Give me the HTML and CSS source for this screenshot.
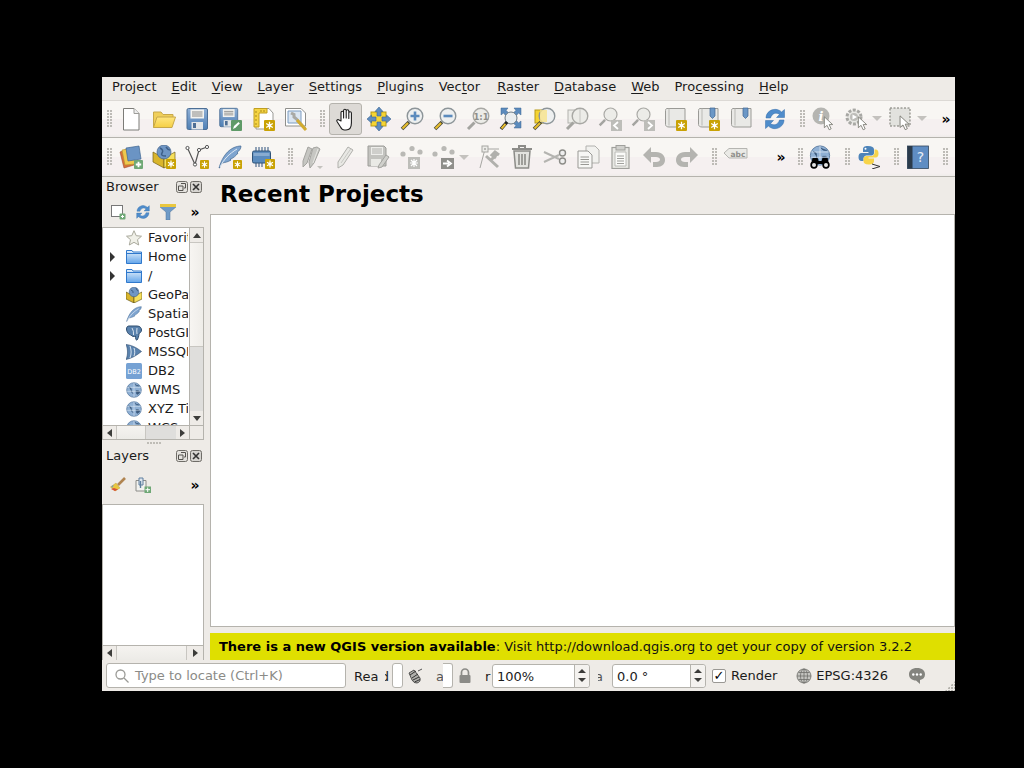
FILE: index.html
```html
<!DOCTYPE html>
<html>
	<head>
		<meta charset="utf-8">
		<title>QGIS</title>
		<link rel="stylesheet" href="styles.css">
	</head>
	<body>
		<svg class="defs" width="0" height="0">
			<defs>
				<linearGradient id="blue" x1="0" y1="0" x2="0" y2="1"><stop offset="0" stop-color="#8fb0d6"/><stop offset="1" stop-color="#4f7fb5"/></linearGradient>
				<linearGradient id="folder" x1="0" y1="0" x2="0" y2="1"><stop offset="0" stop-color="#ffe680"/><stop offset="1" stop-color="#f5cf45"/></linearGradient>
				<linearGradient id="bluefolder" x1="0" y1="0" x2="0" y2="1"><stop offset="0" stop-color="#e6f1fb"/><stop offset="1" stop-color="#63a5ea"/></linearGradient>

				<symbol id="badge" viewBox="0 0 10 10"><rect width="10" height="10" rx="1" fill="#c9a205"/><path d="M5 1.5V8.5M2 3.2L8 6.8M8 3.2L2 6.8" stroke="#fff" stroke-width="1.2"/><circle cx="5" cy="5" r="1.5" fill="#fff"/></symbol>
				<symbol id="plus-badge" viewBox="0 0 10 10"><rect width="10" height="10" rx="1" fill="#6fa876"/><path d="M5 2V8M2 5H8" stroke="#fff" stroke-width="2"/></symbol>
				<symbol id="cursor" viewBox="0 0 12 18"><path d="M1 1V14L4.3 11.2L6.8 16.5L9.2 15.4L6.8 10.3H11Z" fill="#fff" stroke="#77776f" stroke-width="1"/></symbol>

				<symbol id="i-new" viewBox="0 0 24 24"><path d="M4.500 1.500H15L20 6.500V23H4.500Z" fill="#fff" stroke="#7c7c78"/><path d="M15 1.500V6.500H20" fill="#eee" stroke="#9c9c98"/></symbol>
				<symbol id="i-open" viewBox="0 0 24 24"><path d="M1.500 20.500V5H9L11 7.500H21V10" fill="#f0cf5a" stroke="#c7a84a"/><path d="M1.500 20.500L5 10H23.500L20 20.500Z" fill="url(#folder)" stroke="#c7a84a"/></symbol>
				<symbol id="floppy" viewBox="0 0 24 24"><path d="M3.500 1.500H21Q22.500 1.500 22.500 3V21Q22.500 22.500 21 22.500H3.500Q2 22.500 2 21V3Q2 1.500 3.500 1.500Z" fill="url(#blue)" stroke="#4c6f96"/><rect x="5.500" y="2.500" width="13.500" height="9" fill="#f3f3f0"/><path d="M7 5H17.500M7 7H17.500M7 9H17.500" stroke="#8a8a88"/><rect x="6.500" y="15" width="11.500" height="7.500" fill="#e4e6e8"/><rect x="8" y="16" width="3" height="5" fill="#4f6f95"/></symbol>
				<symbol id="i-saveas" viewBox="0 0 24 24"><use href="#floppy" width="21" height="21"/><rect x="13" y="13" width="11" height="11" rx="1" fill="#5f9a68"/><path d="M15 22L16 19L20.500 15L21.800 16.400L17.500 20.800Z" fill="#fff"/></symbol>
				<symbol id="i-layoutnew" viewBox="0 0 24 24"><path d="M5 1.500H18L22 6V22H5Z" fill="#fff" stroke="#9a9a96"/><path d="M3 1.500H16V6H8V20H3Z" fill="#f5d442" stroke="#c09f20"/><path d="M4 5H6M4 9H6M4 13H6M4 17H6M10 3V5M13 3V5" stroke="#a98a1c"/><use href="#badge" x="13" y="13" width="11" height="11"/></symbol>
				<symbol id="i-layoutman" viewBox="0 0 24 24"><path d="M1.500 1.500H17L21.500 6V19H1.500Z" fill="#fff" stroke="#8f8f8b"/><path d="M4 4H17V16H4Z" fill="#dbe6f2" stroke="#7d9cc0"/><path d="M7 6L10 7.500V10L12.500 12L21 21.500" fill="none" stroke="#a9a9a5" stroke-width="3"/><path d="M13 13L22 23" stroke="#d2ab2f" stroke-width="3"/></symbol>
				<symbol id="i-hand" viewBox="0 0 24 24"><path d="M7 14V5.500A1.300 1.300 0 0 1 9.600 5.500V11V3.500A1.300 1.300 0 0 1 12.200 3.500V11V4A1.300 1.300 0 0 1 14.800 4V11.500V6A1.300 1.300 0 0 1 17.400 6V16C17.400 20 15.500 23 12 23H10.500C8.500 23 7.500 22 6.500 20L3 14.500C2.200 13 4 12 5 13Z" fill="#fff" stroke="#1c1c1c" stroke-width="1.100" stroke-linejoin="round"/></symbol>
				<symbol id="i-pansel" viewBox="0 0 24 24"><rect x="4" y="5" width="15" height="14" fill="#f5d432" stroke="#b79a18"/><path d="M12 0L16 4.500H14V9H10V4.500H8ZM12 24L16 19.500H14V15H10V19.500H8ZM0 12L4.500 8V10H9V14H4.500V16ZM24 12L19.500 8V10H15V14H19.500V16Z" fill="#5f8dbf" stroke="#3f6690" stroke-width=".6"/></symbol>
				<symbol id="glass" viewBox="0 0 24 24"><path d="M9 15L2 22" stroke="#4a4a38" stroke-width="3.600"/><path d="M8 16L2.500 21.500" stroke="#e8be2e" stroke-width="2.200"/><circle cx="15" cy="9" r="7.800" fill="#eef0f0" stroke="#8d9599" stroke-width="1.400"/></symbol>
				<symbol id="glass-grey" viewBox="0 0 24 24"><path d="M8.500 15.500L2 22" stroke="#a4a4a0" stroke-width="3"/><circle cx="15" cy="9" r="7.800" fill="#ecece8" stroke="#a8a8a4" stroke-width="1.400"/></symbol>
				<symbol id="i-zin" viewBox="0 0 24 24"><use href="#glass"/><path d="M15 4.500V13.500M10.500 9H19.500" stroke="#5b8bbd" stroke-width="2.600"/></symbol>
				<symbol id="i-zout" viewBox="0 0 24 24"><use href="#glass"/><path d="M10.500 9H19.500" stroke="#5b8bbd" stroke-width="2.600"/></symbol>
				<symbol id="i-z11" viewBox="0 0 24 24"><use href="#glass-grey"/><text x="15" y="12.500" text-anchor="middle" font-family="DejaVu Sans" font-weight="bold" font-size="8.500" fill="#8f8f8b">1:1</text></symbol>
				<symbol id="i-zfull" viewBox="0 0 24 24"><path d="M2 1H9L7 3.500L10 6L7 9L4.500 6L2 8ZM22 1H15L17 3.500L14 6L17 9L19.500 6L22 8ZM22 21H15L17 18.500L14 16L17 13L19.500 16L22 14Z" fill="#5b8bbd" stroke="#3f6690" stroke-width=".5"/><circle cx="12" cy="11" r="6" fill="#e9edef" stroke="#6f7c85"/><path d="M8 15L2 22" stroke="#222" stroke-width="3.400"/><path d="M6.500 17L2.500 21.500" stroke="#e8be2e" stroke-width="2"/></symbol>
				<symbol id="i-zsel" viewBox="0 0 24 24"><rect x="3" y="3" width="12" height="13" fill="#f5d432" stroke="#b79a18"/><use href="#glass"/><rect x="8" y="3" width="7" height="12" fill="#f7e48a" opacity=".8"/></symbol>
				<symbol id="i-zlayer" viewBox="0 0 24 24"><rect x="3" y="3" width="12" height="13" fill="#ecece8" stroke="#b1b1ad"/><use href="#glass-grey"/><path d="M15 2V16" stroke="#c4c4c0"/></symbol>
				<symbol id="i-zlast" viewBox="0 0 24 24"><use href="#glass-grey" width="20" height="20"/><rect x="13" y="13" width="11" height="11" fill="#bdbdb9"/><path d="M20 15L16 18.500L20 22" fill="none" stroke="#fff" stroke-width="1.800"/></symbol>
				<symbol id="i-znext" viewBox="0 0 24 24"><use href="#glass-grey" width="20" height="20"/><rect x="13" y="13" width="11" height="11" fill="#bdbdb9"/><path d="M17 15L21 18.500L17 22" fill="none" stroke="#fff" stroke-width="1.800"/></symbol>
				<symbol id="scroll" viewBox="0 0 24 24"><path d="M3 1.500H21V20H5C3 20 1.500 19 1.500 17.500V3.500C1.500 2.500 2 1.500 3 1.500Z" fill="#e9e9e6" stroke="#9a9a96"/><path d="M5 1.500V18.500" stroke="#b9b9b5"/></symbol>
				<symbol id="i-map" viewBox="0 0 24 24"><use href="#scroll"/><use href="#badge" x="12" y="13" width="11" height="11"/></symbol>
				<symbol id="i-bmnew" viewBox="0 0 24 24"><use href="#scroll"/><path d="M13 1H18V9L15.500 11.500L13 9Z" fill="#6a97c6" stroke="#3f6690" stroke-width=".7"/><use href="#badge" x="12" y="13" width="11" height="11"/></symbol>
				<symbol id="i-bm" viewBox="0 0 24 24"><use href="#scroll"/><path d="M13 1H18V9L15.500 11.500L13 9Z" fill="#6a97c6" stroke="#3f6690" stroke-width=".7"/></symbol>
				<symbol id="i-refresh" viewBox="0 0 24 24"><path d="M3 11C3 5 9 1.500 14 2.500C16 3 17.500 3.800 18.500 5L21.500 2.500V10.500H13.500L16.500 7.500C13.500 5 9 6 7.500 11Z" fill="#4f8ccb" stroke="#356da8" stroke-width=".5"/><path d="M21 13C21 19 15 22.500 10 21.500C8 21 6.500 20.200 5.500 19L2.500 21.500V13.500H10.500L7.500 16.500C10.500 19 15 18 16.500 13Z" fill="#4f8ccb" stroke="#356da8" stroke-width=".5"/></symbol>
				<symbol id="i-identify" viewBox="0 0 24 24"><circle cx="9" cy="9" r="8.500" fill="#b5b5b1"/><text x="9" y="14" text-anchor="middle" font-family="DejaVu Serif" font-style="italic" font-weight="bold" font-size="13" fill="#fff">i</text><use href="#cursor" x="11" y="9" width="11" height="15"/></symbol>
				<symbol id="i-action" viewBox="0 0 24 24"><circle cx="10" cy="10" r="7" fill="#e9e9e5" stroke="#a8a8a4" stroke-width="3" stroke-dasharray="3 1.500"/><circle cx="10" cy="10" r="4" fill="#bdbdb9"/><path d="M8.500 7.500L13 10L8.500 12.500Z" fill="#fff"/><use href="#cursor" x="13" y="9" width="11" height="15"/></symbol>
				<symbol id="i-select" viewBox="0 0 24 24"><rect x="1" y="1" width="20" height="18" fill="#e2e2de" stroke="#77776f" stroke-dasharray="2 1.500"/><use href="#cursor" x="10" y="8" width="11" height="16"/></symbol>

				<symbol id="i-dsm" viewBox="0 0 24 24"><path d="M1 7L11 3L15 20L5 23Z" fill="#d96f3a" stroke="#9e4e29" stroke-width=".6"/><path d="M3 5L14 3L16 19L6 20Z" fill="#efc84d" stroke="#b4932d" stroke-width=".6"/><path d="M7 3L20 1L22 14L9 16Z" fill="#6b94c4" stroke="#3f6690" stroke-width=".7"/><use href="#plus-badge" x="15" y="15" width="9" height="9"/></symbol>
				<symbol id="i-gpkg" viewBox="0 0 24 24"><path d="M1 7L12 13V23L1 17Z" fill="#d9b52c" stroke="#72601a" stroke-width=".7"/><path d="M12 13L23 7V17L12 23Z" fill="#f6e05c" stroke="#72601a" stroke-width=".7"/><circle cx="12" cy="7" r="7" fill="#6f96c4" stroke="#3f5f85" stroke-width=".7"/><path d="M8 3Q12 5 10 8T14 11M14 2Q16 5 18 5" stroke="#3d5f88" fill="none" stroke-width="1.500"/><use href="#badge" x="14" y="14" width="10" height="10"/></symbol>
				<symbol id="i-shp" viewBox="0 0 24 24"><path d="M2.500 3L10 19.500L14 5L22 2" fill="none" stroke="#555" stroke-width="1.200"/><g fill="#fff" stroke="#555"><circle cx="2.500" cy="3" r="1.600"/><circle cx="10" cy="19.500" r="1.600"/><circle cx="14" cy="5" r="1.600"/><circle cx="22" cy="2" r="1.600"/></g><use href="#badge" x="15" y="15" width="9" height="9"/></symbol>
				<symbol id="feather" viewBox="0 0 24 24"><path d="M1 23C3 16 7 7 15 3C18 1.500 21 1 23 1C23 4 21 6 19 7.500L20 8C18 11 15 13 12 14.500L13 15C10 17 7 17.500 4 18C3 19.500 2 21.500 1.500 23Z" fill="#7ea4cf" stroke="#3f6690" stroke-width=".7"/><path d="M2 22C6 14 11 9 19 4" stroke="#dfe9f4" fill="none"/></symbol>
				<symbol id="i-spatialite" viewBox="0 0 24 24"><use href="#feather"/><use href="#badge" x="15" y="15" width="9" height="9"/></symbol>
				<symbol id="i-temp" viewBox="0 0 24 24"><path d="M5 6V2M8 6V2M11 6V2M14 6V2M17 6V2M5 18V22M8 18V22M11 18V22" stroke="#3f5f85" stroke-width="1.100"/><rect x="1.500" y="6" width="18" height="12" rx="1.500" fill="#5b8bbd" stroke="#2f5378"/><rect x="2.500" y="8" width="16" height="3" fill="#88abd0"/><use href="#badge" x="14" y="14" width="10" height="10"/></symbol>

				<symbol id="i-editall" viewBox="0 0 24 24"><path d="M3 16L8 2L12 4L7 18L3 22ZM9 17L13 3L17 2L20 4L14 18L10 23Z" fill="#c6c6c2" stroke="#a3a39f"/><path d="M13 18L18 4" stroke="#e6e6e2"/></symbol>
				<symbol id="i-pencil" viewBox="0 0 24 24"><path d="M5 17L15 2L20 5L10 20L5 23Z" fill="#e8e8e4" stroke="#b0b0ac"/><path d="M8 18L18 3.500" stroke="#c8c8c4"/></symbol>
				<symbol id="i-savelayer" viewBox="0 0 24 24"><path d="M2 1H18L20 3V21H2Z" fill="#c3c3bf" stroke="#9d9d99"/><rect x="5" y="2" width="12" height="8" fill="#ededea"/><path d="M6 4H16M6 6H16M6 8H16" stroke="#b0b0ac"/><rect x="5" y="14" width="10" height="7" fill="#eaeae6"/><path d="M13 20L20 10L23 12L16 22L12 23Z" fill="#d0d0cc" stroke="#a3a39f"/></symbol>
				<symbol id="i-addf" viewBox="0 0 24 24"><g fill="#b9b9b5"><circle cx="4" cy="9" r="2.600"/><circle cx="13" cy="3.500" r="2.600"/><circle cx="21" cy="7" r="2.600"/></g><rect x="9" y="12" width="12" height="12" fill="#bdbdb9"/><path d="M15 14V22M11 18H19M12 15L18 21M18 15L12 21" stroke="#fff" stroke-width="1.200"/></symbol>
				<symbol id="i-movef" viewBox="0 0 24 24"><g fill="#b9b9b5"><circle cx="4" cy="9" r="2.600"/><circle cx="13" cy="3.500" r="2.600"/><circle cx="21" cy="7" r="2.600"/></g><rect x="10" y="13" width="13" height="11" fill="#8f8f8b"/><path d="M12 18.500H18M16 15.500L20 18.500L16 21.500" stroke="#fff" stroke-width="1.800" fill="none"/></symbol>
				<symbol id="i-nodetool" viewBox="0 0 24 24"><path d="M3 23L8 4H22" fill="none" stroke="#a6a6a2"/><rect x="5" y="1" width="6" height="6" fill="#ecece8" stroke="#a6a6a2"/><circle cx="8" cy="4" r="1" fill="#a6a6a2"/><path d="M9 11L21 22M21 8L13 16M22 10L18 7L15 10L19 13" stroke="#b0b0ac" stroke-width="3" fill="none"/></symbol>
				<symbol id="i-trash" viewBox="0 0 24 24"><path d="M4 6H20L18.500 23H5.500Z" fill="#e3e3df" stroke="#8c8c88" stroke-width="1.500"/><path d="M2 4H22M9 3V1H15V3" stroke="#8c8c88" stroke-width="2" fill="none"/><path d="M9 9V20M12 9V20M15 9V20" stroke="#8c8c88" stroke-width="1.600"/></symbol>
				<symbol id="i-cut" viewBox="0 0 24 24"><path d="M1 7L16 14M1 17L16 10" stroke="#b4b4b0" stroke-width="2" fill="none"/><circle cx="19.500" cy="8" r="3" fill="#eee" stroke="#8c8c88" stroke-width="1.400"/><circle cx="19.500" cy="16" r="3" fill="#eee" stroke="#8c8c88" stroke-width="1.400"/></symbol>
				<symbol id="i-copy" viewBox="0 0 24 24"><path d="M10 1H19L23 5V18H10Z" fill="#f1f1ee" stroke="#b2b2ae"/><path d="M2 6H12L16 10V23H2Z" fill="#f7f7f5" stroke="#999995"/><path d="M4.500 12H13M4.500 14.500H13M4.500 17H13M4.500 19.500H13" stroke="#999995"/></symbol>
				<symbol id="i-paste" viewBox="0 0 24 24"><rect x="3" y="2.500" width="17" height="21" fill="#e8e8e4" stroke="#a0a09c" stroke-width="1.200"/><rect x="7" y="0.500" width="9" height="4.500" fill="#d0d0cc" stroke="#a0a09c"/><path d="M6 7H17V21H6Z" fill="#fafaf8" stroke="#bcbcb8"/><path d="M8 11H15M8 13.500H15M8 16H15M8 18.500H15" stroke="#a0a09c"/></symbol>
				<symbol id="i-undo" viewBox="0 0 24 24"><path d="M1 10L9 2V7H14C20 7 23 11 23 15C23 19 20 22 15 22H11V17H14C16.500 17 18 16 18 14.500C18 13 16.500 12 14 12H9V18Z" fill="#b4b4b0"/></symbol>
				<symbol id="i-redo" viewBox="0 0 24 24"><path d="M23 10L15 2V7H10C4 7 1 11 1 15C1 19 4 22 9 22H13V17H10C7.500 17 6 16 6 14.500C6 13 7.500 12 10 12H15V18Z" fill="#b4b4b0"/></symbol>
				<symbol id="i-abc" viewBox="0 0 24 24"><path d="M0 8L5 3.500H23V13H5Z" fill="#eaeae6" stroke="#b5b5b1"/><text x="14" y="11.500" text-anchor="middle" font-family="DejaVu Sans" font-weight="bold" font-size="7.500" fill="#8f8f8b">abc</text></symbol>
				<symbol id="globe" viewBox="0 0 24 24"><circle cx="12" cy="12" r="11" fill="#8fb0d4" stroke="#4e7199"/><path d="M4 7Q9 9 8 12T11 18M13 3Q15 7 20 6M15 13Q19 12 21 15Q18 20 16 18Z" fill="#3d5b7e" stroke="#3d5b7e"/><path d="M2 8H22M1.500 14H22M12 1V23" stroke="#eef4fa" stroke-width=".7" fill="none"/></symbol>
				<symbol id="i-metasearch" viewBox="0 0 24 24"><use href="#globe" width="24" height="21"/><path d="M3 19L4.500 13H9.500L10.500 16H13.500L14.500 13H19.500L21 19Z" fill="#000"/><circle cx="6" cy="20" r="3.700" fill="#000"/><circle cx="18" cy="20" r="3.700" fill="#000"/><circle cx="6" cy="20" r="2" fill="#e4e4e4"/><circle cx="18" cy="20" r="2" fill="#e4e4e4"/></symbol>
				<symbol id="i-python" viewBox="-1 0 24 24"><path d="M10 1C6 1 5 2.500 5 4.500V7H10.500V8H3.500C1.500 8 .5 9.500 .5 12C.5 14.500 1.500 16 3.500 16H5.500V13.500C5.500 12 7 10.500 8.500 10.500H13.500C15 10.500 16 9.500 16 8V4.500C16 2.500 14 1 10 1Z" fill="#4d84b9"/><circle cx="7.500" cy="3.800" r="1" fill="#fff"/><path d="M10.500 19.500C14.500 19.500 16 18 16 16V13.500H10.500V12.500H17.500C19.500 12.500 20.500 11 20.500 8.500C20.500 6 19.500 4.500 17.500 4.500H16.500V8C16.500 9.500 15 11 13.500 11H8.500C7 11 5.500 12 5.500 13.500V16C5.500 18 7 19.500 10.500 19.500Z" fill="#f7d44a"/><path d="M14 19L22 21.500L14 24" fill="none" stroke="#333" stroke-width="1"/></symbol>
				<symbol id="i-help" viewBox="0 0 24 24"><rect x="1.500" y="1" width="21" height="22.500" fill="#5f8dc3" stroke="#32465c" stroke-width=".8"/><rect x="1.500" y="1" width="5" height="22.500" fill="#2b3b4b"/><text x="14.500" y="17" text-anchor="middle" font-family="DejaVu Sans" font-size="14" fill="#e8eef6">?</text></symbol>

				<symbol id="i-float" viewBox="0 0 12 12"><rect x=".5" y=".5" width="11" height="11" rx="2" fill="#e4e2de" stroke="#6f6d68"/><path d="M5 2.500H9.500V7H8M2.500 5H7V9.500H2.500Z" fill="none" stroke="#55534f"/></symbol>
				<symbol id="i-close" viewBox="0 0 12 12"><rect x=".5" y=".5" width="11" height="11" rx="2" fill="#d6d4d0" stroke="#6f6d68"/><path d="M3 3L9 9M9 3L3 9" stroke="#333" stroke-width="1.600"/></symbol>
				<symbol id="i-adddock" viewBox="0 0 16 16"><rect x="1.500" y="1.500" width="11" height="11" fill="#fff" stroke="#777"/><rect x="9.500" y="9.500" width="6" height="6" rx="1" fill="#6fa876"/><path d="M12.500 11V14M11 12.500H14" stroke="#fff"/></symbol>
				<symbol id="i-filter" viewBox="0 0 16 16"><path d="M0 0H16V3L10 8V16L6 16V8L0 3Z" fill="#6e9ac7" stroke="#4c7199" stroke-width=".5"/><rect x="0" y="0" width="16" height="3" fill="#e9c73f"/></symbol>
				<symbol id="i-star" viewBox="0 0 16 16"><path d="M8 .7L10.200 5.700L15.500 6.200L11.500 9.700L12.700 15L8 12.300L3.300 15L4.500 9.700L.5 6.200L5.800 5.700Z" fill="#f0f0e8" stroke="#a9a99c"/></symbol>
				<symbol id="i-dir" viewBox="0 0 16 16"><path d="M.5 14.500V1.500H6L7 3H15.500V14.500Z" fill="url(#bluefolder)" stroke="#2f78cc"/><path d="M.5 4.500H15.500" stroke="#2f78cc"/></symbol>
				<symbol id="i-gpkg16" viewBox="0 0 16 16"><path d="M0 5L8 9V16L0 12Z" fill="#d9b52c" stroke="#54480f" stroke-width=".6"/><path d="M8 9L16 5V12L8 16Z" fill="#f6e05c" stroke="#54480f" stroke-width=".6"/><circle cx="8" cy="5" r="4.800" fill="#6f96c4" stroke="#3f5f85" stroke-width=".6"/><path d="M5 3Q8 4 7 6M10 1Q11 4 12 4" stroke="#3d5f88" fill="none"/></symbol>
				<symbol id="i-pg" viewBox="0 0 16 16"><path d="M3 1H11C14 1 15.500 3 15.500 5C15.500 7 14 8 13 8.500C13 11 12 14 11 15C10 15.500 9.500 14 9.500 11C8 12 6 11.500 5 10C3 10 .5 7 .5 4C.5 2 1.500 1 3 1Z" fill="#5a82ad" stroke="#2f4e70"/><path d="M6 3Q8 6 7.500 10M11 3Q10.500 6 11 9" stroke="#d8e4f0" fill="none"/></symbol>
				<symbol id="i-mssql" viewBox="0 0 16 16"><path d="M0 .5C5 1 10 3 15.500 7.500C10 12 5 14.500 0 15.500C2 11 2 5 0 .5Z" fill="#5a82ad" stroke="#2f4e70" stroke-width=".6"/><path d="M4 2C5.500 6 5.500 10 4 14M8 4C9 7 9 9.500 8 12" stroke="#d8e4f0" fill="none"/></symbol>
				<symbol id="i-db2" viewBox="0 0 16 16"><rect width="16" height="16" rx="1.500" fill="#76a2d4"/><text x="8" y="10.500" text-anchor="middle" font-family="DejaVu Sans" font-size="6.500" fill="#fff">DB2</text></symbol>
				<symbol id="i-brush" viewBox="0 0 16 16"><path d="M.5 10L6 6L10 11L5 14Z" fill="#e9c73f" stroke="#b69a2c" stroke-width=".4"/><path d="M1 12L5 14L8 12.500L4 11Z" fill="#d9533a"/><path d="M1.500 9L4 8L2 11Z" fill="#6b94c4"/><path d="M8 8L15 1" stroke="#b08450" stroke-width="2.600"/></symbol>
				<symbol id="i-grouplay" viewBox="0 0 16 16"><path d="M1 3.500H11V14H1Z" fill="#f2f2ef" stroke="#8c8c88"/><path d="M4 1H8V8H4Z" fill="#dfe6ee" stroke="#5e7f9f"/><path d="M5.500 4V11" stroke="#5e7f9f" stroke-width="1.400"/><rect x="9.500" y="9.500" width="6.500" height="6.500" fill="#6fa876"/><path d="M12.700 10.500V15M10.500 12.700H15" stroke="#fff"/></symbol>
				<symbol id="i-mouse" viewBox="0 0 16 16"><path d="M2 5L7 2L13 10Q14 14 10 15Q7 15.500 5 12Z" fill="#b0b0ac" stroke="#333" stroke-width=".8"/><path d="M3 7L9 3M5 10L11 6M6 12L12 9M7.500 14L13 11.500" stroke="#333"/><path d="M11 3L15 1" stroke="#555"/></symbol>
				<symbol id="i-lock" viewBox="0 0 16 16"><path d="M4.500 7V4.500A3.500 3.500 0 0 1 11.500 4.500V7" fill="none" stroke="#8b8b87" stroke-width="1.700"/><rect x="2.500" y="7" width="11" height="8" rx="1" fill="#8b8b87"/></symbol>
				<symbol id="i-crs" viewBox="0 0 16 16"><circle cx="8" cy="8" r="7" fill="#c4c4c0" stroke="#80807c"/><path d="M1 8H15M8 1V15M2.500 4.500H13.500M2.500 11.500H13.500" stroke="#6f6f6b" stroke-width=".8"/><ellipse cx="8" cy="8" rx="3.500" ry="7" fill="none" stroke="#6f6f6b" stroke-width=".8"/></symbol>
				<symbol id="i-bubble" viewBox="0 0 18 18"><path d="M9 1C4 1 1 3.500 1 7.500C1 11 4 13.500 8 13.500L12 17L12 13C15 12.500 17 10.500 17 7.500C17 3.500 14 1 9 1Z" fill="#84847f"/><g fill="#fff"><circle cx="5.300" cy="7.500" r="1.200"/><circle cx="9" cy="7.500" r="1.200"/><circle cx="12.700" cy="7.500" r="1.200"/></g></symbol>
			</defs>
		</svg>

		<div class="window">
			<div class="menubar">
				<span class="menu">Project</span>
				<span class="menu"><u>E</u>dit</span>
				<span class="menu"><u>V</u>iew</span>
				<span class="menu"><u>L</u>ayer</span>
				<span class="menu"><u>S</u>ettings</span>
				<span class="menu"><u>P</u>lugins</span>
				<span class="menu">Vec<u>t</u>or</span>
				<span class="menu menu-raster"><u>R</u>aster</span>
				<span class="menu"><u>D</u>atabase</span>
				<span class="menu"><u>W</u>eb</span>
				<span class="menu">Pro<u>c</u>essing</span>
				<span class="menu"><u>H</u>elp</span>
			</div>

			<div class="toolbar">
				<span class="grip grip-first"></span>
				<span class="tool"><svg class="ico"><use href="#i-new"/></svg></span>
				<span class="tool"><svg class="ico"><use href="#i-open"/></svg></span>
				<span class="tool"><svg class="ico"><use href="#floppy"/></svg></span>
				<span class="tool"><svg class="ico"><use href="#i-saveas"/></svg></span>
				<span class="tool"><svg class="ico"><use href="#i-layoutnew"/></svg></span>
				<span class="tool"><svg class="ico"><use href="#i-layoutman"/></svg></span>
				<span class="grip grip-wide"></span>
				<span class="tool pressed"><svg class="ico"><use href="#i-hand"/></svg></span>
				<span class="tool"><svg class="ico"><use href="#i-pansel"/></svg></span>
				<span class="tool"><svg class="ico"><use href="#i-zin"/></svg></span>
				<span class="tool"><svg class="ico"><use href="#i-zout"/></svg></span>
				<span class="tool"><svg class="ico"><use href="#i-z11"/></svg></span>
				<span class="tool"><svg class="ico"><use href="#i-zfull"/></svg></span>
				<span class="tool"><svg class="ico"><use href="#i-zsel"/></svg></span>
				<span class="tool"><svg class="ico"><use href="#i-zlayer"/></svg></span>
				<span class="tool"><svg class="ico"><use href="#i-zlast"/></svg></span>
				<span class="tool"><svg class="ico"><use href="#i-znext"/></svg></span>
				<span class="tool"><svg class="ico"><use href="#i-map"/></svg></span>
				<span class="tool"><svg class="ico"><use href="#i-bmnew"/></svg></span>
				<span class="tool"><svg class="ico"><use href="#i-bm"/></svg></span>
				<span class="tool"><svg class="ico"><use href="#i-refresh"/></svg></span>
				<span class="grip"></span>
				<span class="tool"><svg class="ico"><use href="#i-identify"/></svg></span>
				<span class="tool tool-menu"><svg class="ico"><use href="#i-action"/></svg><span class="drop"></span></span>
				<span class="tool tool-menu"><svg class="ico"><use href="#i-select"/></svg><span class="drop"></span></span>
				<span class="more more-end">»</span>
			</div>

			<div class="toolbar">
				<span class="grip grip-first"></span>
				<span class="tool"><svg class="ico"><use href="#i-dsm"/></svg></span>
				<span class="tool"><svg class="ico"><use href="#i-gpkg"/></svg></span>
				<span class="tool"><svg class="ico"><use href="#i-shp"/></svg></span>
				<span class="tool"><svg class="ico"><use href="#i-spatialite"/></svg></span>
				<span class="tool"><svg class="ico"><use href="#i-temp"/></svg></span>
				<span class="grip"></span>
				<span class="tool"><svg class="ico"><use href="#i-editall"/></svg><span class="drop drop-over"></span></span>
				<span class="tool"><svg class="ico"><use href="#i-pencil"/></svg></span>
				<span class="tool"><svg class="ico"><use href="#i-savelayer"/></svg></span>
				<span class="tool"><svg class="ico"><use href="#i-addf"/></svg></span>
				<span class="tool tool-menu"><svg class="ico"><use href="#i-movef"/></svg><span class="drop"></span></span>
				<span class="tool"><svg class="ico"><use href="#i-nodetool"/></svg></span>
				<span class="tool"><svg class="ico"><use href="#i-trash"/></svg></span>
				<span class="tool"><svg class="ico"><use href="#i-cut"/></svg></span>
				<span class="tool"><svg class="ico"><use href="#i-copy"/></svg></span>
				<span class="tool"><svg class="ico"><use href="#i-paste"/></svg></span>
				<span class="tool"><svg class="ico"><use href="#i-undo"/></svg></span>
				<span class="tool"><svg class="ico"><use href="#i-redo"/></svg></span>
				<span class="grip"></span>
				<span class="tool"><svg class="ico"><use href="#i-abc"/></svg></span>
				<span class="more more-mid">»</span>
				<span class="grip grip-narrow"></span>
				<span class="tool"><svg class="ico"><use href="#i-metasearch"/></svg></span>
				<span class="grip"></span>
				<span class="tool"><svg class="ico"><use href="#i-python"/></svg></span>
				<span class="grip"></span>
				<span class="tool"><svg class="ico"><use href="#i-help"/></svg></span>
				<span class="grip"></span>
			</div>

			<div class="workspace">
				<div class="docks">
					<div class="dock dock-browser">
						<div class="dock-title">
							<span class="dock-name">Browser</span>
							<svg class="dock-btn"><use href="#i-float"/></svg>
							<svg class="dock-btn"><use href="#i-close"/></svg>
						</div>
						<div class="dock-tools">
							<span class="dock-tool"><svg class="ico16"><use href="#i-adddock"/></svg></span>
							<span class="dock-tool"><svg class="ico16"><use href="#i-refresh"/></svg></span>
							<span class="dock-tool"><svg class="ico16"><use href="#i-filter"/></svg></span>
							<span class="more more-dock">»</span>
						</div>
						<div class="tree">
							<div class="tree-rows">
								<div class="row"><span class="twisty"></span><svg class="ico16"><use href="#i-star"/></svg><span class="row-text">Favorites</span></div>
								<div class="row"><span class="twisty closed"></span><svg class="ico16"><use href="#i-dir"/></svg><span class="row-text">Home</span></div>
								<div class="row"><span class="twisty closed"></span><svg class="ico16"><use href="#i-dir"/></svg><span class="row-text">/</span></div>
								<div class="row"><span class="twisty"></span><svg class="ico16"><use href="#i-gpkg16"/></svg><span class="row-text">GeoPackage</span></div>
								<div class="row"><span class="twisty"></span><svg class="ico16"><use href="#feather"/></svg><span class="row-text">SpatiaLite</span></div>
								<div class="row"><span class="twisty"></span><svg class="ico16"><use href="#i-pg"/></svg><span class="row-text">PostGIS</span></div>
								<div class="row"><span class="twisty"></span><svg class="ico16"><use href="#i-mssql"/></svg><span class="row-text">MSSQL</span></div>
								<div class="row"><span class="twisty"></span><svg class="ico16"><use href="#i-db2"/></svg><span class="row-text">DB2</span></div>
								<div class="row"><span class="twisty"></span><svg class="ico16"><use href="#globe"/></svg><span class="row-text">WMS</span></div>
								<div class="row"><span class="twisty"></span><svg class="ico16"><use href="#globe"/></svg><span class="row-text">XYZ Tiles</span></div>
								<div class="row"><span class="twisty"></span><svg class="ico16"><use href="#globe"/></svg><span class="row-text">WCS</span></div>
							</div>
							<div class="vscroll">
								<span class="sb-btn"><span class="arr arr-up"></span></span>
								<span class="sb-thumb sb-thumb-v"></span>
								<span class="sb-track"></span>
								<span class="sb-btn"><span class="arr arr-down"></span></span>
							</div>
							<div class="hscroll">
								<span class="sb-btn"><span class="arr arr-left"></span></span>
								<span class="sb-thumb sb-thumb-h"></span>
								<span class="sb-track"></span>
								<span class="sb-btn"><span class="arr arr-right"></span></span>
							</div>
							<span class="corner"></span>
						</div>
					</div>
					<div class="splitter"></div>
					<div class="dock dock-layers">
						<div class="dock-title">
							<span class="dock-name">Layers</span>
							<svg class="dock-btn"><use href="#i-float"/></svg>
							<svg class="dock-btn"><use href="#i-close"/></svg>
						</div>
						<div class="dock-tools dock-tools-tall">
							<span class="dock-tool"><svg class="ico16"><use href="#i-brush"/></svg></span>
							<span class="dock-tool"><svg class="ico16"><use href="#i-grouplay"/></svg></span>
							<span class="more more-dock more-dock-short">»</span>
						</div>
						<div class="layer-tree">
							<div class="layer-blank"></div>
							<div class="hscroll">
								<span class="sb-btn"><span class="arr arr-left"></span></span>
								<span class="sb-thumb sb-thumb-full"></span>
								<span class="sb-btn"><span class="arr arr-right"></span></span>
							</div>
						</div>
					</div>
				</div>
				<div class="main">
					<h1 class="recent-title">Recent Projects</h1>
					<div class="recent-list"></div>
					<div class="banner"><b>There is a new QGIS version available</b>: Visit http://download.qgis.org to get your copy of version 3.2.2</div>
				</div>
			</div>

			<div class="statusbar">
				<div class="locator">
					<svg class="search" width="16" height="16" viewBox="0 0 16 16"><circle cx="6.500" cy="6.500" r="4.500" fill="none" stroke="#9a9a96" stroke-width="1.300"/><path d="M10 10L14.500 14.500" stroke="#9a9a96" stroke-width="1.300"/></svg>
					<span class="placeholder">Type to locate (Ctrl+K)</span>
				</div>
				<span class="clip-read">Rea</span>
				<span class="clip-d">d</span>
				<span class="stub stub-a"></span>
				<svg class="ico16 mouse"><use href="#i-mouse"/></svg>
				<span class="clip-a">a</span>
				<span class="stub stub-b"></span>
				<svg class="ico16 lock"><use href="#i-lock"/></svg>
				<span class="clip-r">r</span>
				<div class="spin spin-scale"><span class="spin-val">100%</span><span class="spin-btns"><span class="arr arr-up"></span><span class="arr arr-down"></span></span></div>
				<span class="clip-a2">a</span>
				<div class="spin spin-rot"><span class="spin-val">0.0 °</span><span class="spin-btns"><span class="arr arr-up"></span><span class="arr arr-down"></span></span></div>
				<span class="check">✓</span>
				<span class="render">Render</span>
				<svg class="ico16 crs"><use href="#i-crs"/></svg>
				<span class="epsg">EPSG:4326</span>
				<svg class="bubble"><use href="#i-bubble"/></svg>
				<span class="size-grip"></span>
			</div>
		</div>
	</body>
</html>
```

FILE: styles.css
```css
body { margin: 0; background: #000; font: 13px "DejaVu Sans", sans-serif; color: #1b1b1b; overflow: hidden; }
.defs { position: absolute; }
svg { display: block; flex: none; }
u { text-decoration-thickness: 1px; text-underline-offset: 2px; }

.window {
	margin: 77px 0 0 102px;
	width: 853px;
	height: 614px;
	background: #eeebe7;
	display: flex;
	flex-direction: column;
	overflow: hidden;
}

/* menu */
.menubar { height: 23px; display: flex; align-items: center; padding: 0 0 3px 2.5px; box-sizing: border-box; flex: none; }
.menu { padding: 0 7.5px; line-height: 20px; }
.menu-raster { margin-left: 2px; }

/* toolbars */
.toolbar {
	height: 38px;
	flex: none;
	display: flex;
	align-items: center;
	border-top: 1px solid #dcd9d5;
	border-bottom: 1px solid #b5b3ad;
	box-sizing: border-box;
	padding-bottom: 1px;
	background: linear-gradient(#f8f6f3 0, #f8f6f3 50%, #f5f0f0 50%, #f5f0f0 92%, #efecea 100%);
}
.toolbar + .toolbar { height: 39px; border-top: 0; padding-bottom: 0; }
.grip { width: 16px; height: 18px; flex: none; position: relative; }
.grip::before {
	content: "";
	position: absolute;
	left: 9px;
	top: 0;
	width: 5px;
	height: 18px;
	background: radial-gradient(circle at 1px 1px, #bdbbb6 .8px, transparent 1px);
	background-size: 3px 3px;
}
.grip-first { width: 12px; }
.grip-first::before { left: 5px; }
.grip-wide { width: 17px; }
.grip-wide::before { left: 8px; }
.grip-narrow { width: 14px; }
.tool { width: 33px; height: 32px; flex: none; display: flex; align-items: center; justify-content: center; position: relative; box-sizing: border-box; }
.pressed { background: #dddad6; border: 1px solid #b5b3ad; border-radius: 3px; }
.ico { width: 24px; height: 24px; }
.ico16 { width: 16px; height: 16px; }
.tool-menu { width: 45px; justify-content: flex-start; padding-left: 4px; }
.drop { width: 0; height: 0; border: 5px solid transparent; border-top: 5px solid #c4c2be; border-bottom: 0; margin-left: 4px; }
.drop-over { position: absolute; left: 22px; top: 25px; border-width: 3px; border-bottom: 0; margin: 0; }
.more { font-weight: bold; font-size: 14px; color: #000; flex: none; width: 16px; text-align: center; line-height: 16px; }
.more-end { margin-left: auto; margin-right: 1px; }
.more-mid { margin-left: 21px; }

/* main area */
.workspace { flex: 1; display: flex; gap: 6px; min-height: 0; }
.docks { width: 102px; flex: none; display: flex; flex-direction: column; }
.dock { display: flex; flex-direction: column; }
.dock-browser { height: 263px; }
.dock-layers { flex: 1; min-height: 0; }
.splitter { height: 6px; flex: none; background: radial-gradient(circle at 1px 1px, #bdbbb6 .7px, transparent 1px) 0 2px / 3px 3px repeat-x; clip-path: inset(0 42px 0 45px); }
.dock-title { height: 19px; display: flex; align-items: center; padding-left: 4px; flex: none; }
.dock-name { flex: 1; }
.dock-btn { width: 12px; height: 12px; margin-right: 2px; }
.dock-tools { height: 31px; display: flex; align-items: center; flex: none; padding-left: 3px; }
.dock-tools-tall { height: 39px; }
.dock-tool { width: 25px; display: flex; justify-content: center; flex: none; }
.more-dock { margin-left: 7px; }
.more-dock-short { margin-left: 32px; }

/* browser tree */
.tree {
	flex: 1;
	min-height: 0;
	display: grid;
	grid-template-columns: 1fr 14px;
	grid-template-rows: 1fr 14px;
	background: #fff;
	border: 1px solid #b5b3ad;
}
.tree-rows { overflow: hidden; min-width: 0; margin-right: 1px; }
.row { height: 19px; display: flex; align-items: center; white-space: nowrap; }
.twisty { width: 23px; flex: none; display: flex; padding-left: 7px; box-sizing: border-box; }
.closed::before { content: ""; border-left: 5px solid #333; border-top: 5px solid transparent; border-bottom: 5px solid transparent; }
.row-text { margin-left: 6px; }

.vscroll { display: flex; flex-direction: column; border-left: 1px solid #b5b3ad; min-height: 0; }
.hscroll { display: flex; height: 14px; border-top: 1px solid #b5b3ad; box-sizing: border-box; }
.sb-btn { flex: none; width: 13px; height: 13px; display: flex; align-items: center; justify-content: center; background: #eeebe7; }
.vscroll .sb-btn { width: auto; height: 14px; }
.sb-thumb { background: linear-gradient(#f5f3f0, #ecebe7); border: solid #c8c6c1; border-width: 0 1px; box-sizing: border-box; }
.sb-thumb-v { height: 105px; flex: none; border-width: 1px 0; background: linear-gradient(90deg, #f7f5f2, #efede9); }
.sb-thumb-h { width: 30px; flex: none; }
.sb-thumb-full { flex: 1; }
.sb-track { flex: 1; background: #dfdedc; }
.corner { background: #eeebe7; border-left: 1px solid #b5b3ad; border-top: 1px solid #b5b3ad; }
.arr { display: block; width: 0; height: 0; border: 4px solid transparent; }
.arr-up { border-bottom: 5px solid #3c3c3a; border-top: 0; }
.arr-down { border-top: 5px solid #3c3c3a; border-bottom: 0; }
.arr-left { border-right: 5px solid #3c3c3a; border-left: 0; }
.arr-right { border-left: 5px solid #3c3c3a; border-right: 0; }

.layer-tree { flex: 1; min-height: 0; display: flex; flex-direction: column; background: #fff; border: 1px solid #b5b3ad; border-bottom: 0; }
.layer-blank { flex: 1; }
.layer-tree .hscroll { height: 15px; background: #eeebe7; }
.layer-tree .sb-btn:last-child { width: 16px; }

/* recent projects + update bar */
.main { flex: 1; display: flex; flex-direction: column; min-width: 0; }
.recent-title { margin: 0; height: 37px; flex: none; font-size: 23px; line-height: 34px; padding-left: 10px; color: #000; }
.recent-list { flex: 1; background: #fff; border: 1px solid #b5b3ad; }
.banner { height: 27px; margin-top: 6px; flex: none; background: #dfdf00; line-height: 27px; padding-left: 9px; color: #111; white-space: nowrap; }
.banner b { color: #000; }

/* status bar */
.statusbar { height: 31px; flex: none; display: flex; align-items: center; position: relative; }
.locator { width: 240px; height: 25px; margin-left: 4px; background: #fff; border: 1px solid #b5b3ad; border-radius: 3px; box-sizing: border-box; display: flex; align-items: center; flex: none; }
.search { margin-left: 7px; }
.placeholder { margin-left: 5px; color: #8b8b87; }
.clip-read { width: 23px; margin: 2px 0 0 8px; flex: none; white-space: nowrap; }
.clip-d { width: 4px; margin: 2px 0 0 8px; overflow: hidden; direction: rtl; }
.stub { height: 25px; background: #fff; border: 1px solid #b5b3ad; box-sizing: border-box; flex: none; }
.stub-a { width: 11px; margin-left: 3px; border-radius: 3px; }
.mouse { margin-left: 4px; }
.clip-a { width: 7px; margin: 2px 0 0 13px; overflow: hidden; color: #555; }
.stub-b { width: 10px; border-left: 0; border-radius: 0 3px 3px 0; }
.lock { margin-left: 4px; }
.clip-r { margin: 2px 0 0 12px; width: 7px; }
.spin { height: 24px; background: #fff; border: 1px solid #b5b3ad; border-radius: 3px; box-sizing: border-box; display: flex; align-items: center; flex: none; }
.spin-val { flex: 1; padding: 1px 0 0 4px; }
.spin-btns { width: 14px; height: 100%; display: flex; flex-direction: column; align-items: center; justify-content: space-evenly; border-left: 1px solid #b5b3ad; background: #f4f2ef; border-radius: 0 3px 3px 0; }
.spin-btns .arr { border-width: 4px; border-left-color: transparent; border-right-color: transparent; }
.spin-btns .arr-up { border-top: 0; border-bottom-color: #3c3c3a; }
.spin-btns .arr-down { border-bottom: 0; border-top-color: #3c3c3a; }
.spin-scale { width: 98px; }
.clip-a2 { width: 5px; margin: 2px 0 0 8px; overflow: hidden; direction: rtl; color: #555; }
.spin-rot { width: 94px; margin-left: 9px; }
.check { width: 14px; height: 14px; margin-left: 6px; background: #fff; border: 1px solid #9a9894; box-sizing: border-box; border-radius: 2px; font-size: 13px; line-height: 12px; text-align: center; font-weight: bold; color: #000; flex: none; }
.render { margin-left: 5px; }
.crs { margin-left: 19px; }
.epsg { margin-left: 4px; }
.bubble { width: 18px; height: 18px; margin-left: 20px; }
.size-grip { position: absolute; right: 0; bottom: 0; width: 10px; height: 10px; background: radial-gradient(circle at 1px 1px, #b5b3ad .8px, transparent 1px); background-size: 3px 3px; clip-path: polygon(100% 0, 100% 100%, 0 100%); }
```
